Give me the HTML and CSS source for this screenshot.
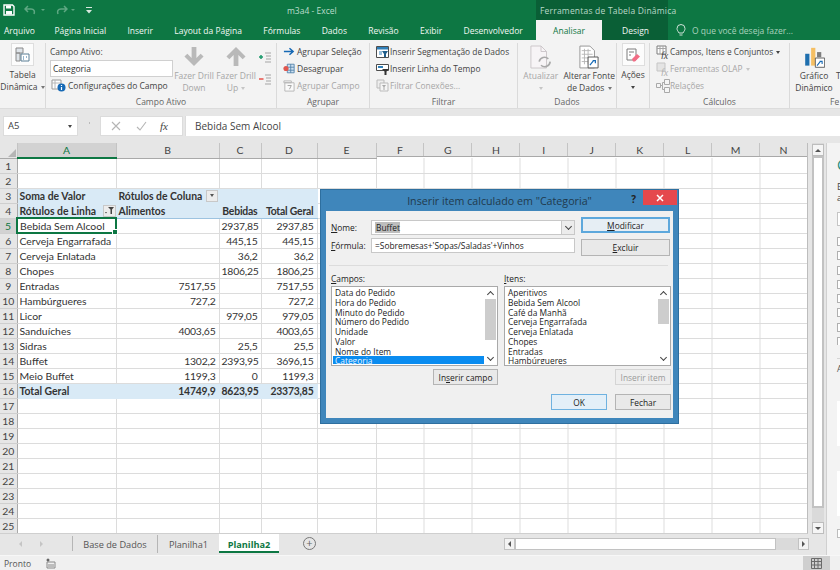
FILE: index.html
```html
<!DOCTYPE html>
<html lang="pt-BR">

<head>
    <meta charset="UTF-8">
    <title>m3a4 - Excel</title>
    <link rel="stylesheet" href="styles.css">
</head>

<body>

    <div class="chrome">
        <div class="title-row">
            <div class="qat">
                <svg width="12" height="12" viewBox="0 0 12 12"><path d="M1 1h8.500L11 2.500V11H1z" fill="none" stroke="#fff" stroke-width="1.400"/><path d="M3 1.500h5v3H3zM3 7h6v3.500H3z" fill="#fff"/></svg>
                <svg class="qat-faded" width="14" height="10" viewBox="0 0 14 10"><path d="M4 1L1 4l3 3M1 4h6c3 0 4 2 3 5" fill="none" stroke="#5fa883" stroke-width="1.500"/></svg>
                <span class="qat-caret"></span>
                <svg class="qat-faded" width="14" height="10" viewBox="0 0 14 10"><path d="M10 1l3 3-3 3M13 4H7C4 4 3 6 4 9" fill="none" stroke="#5fa883" stroke-width="1.500"/></svg>
                <span class="qat-caret"></span>
                <svg class="qat-more" width="6" height="7" viewBox="0 0 6 7"><path d="M0 0h6v1H0zM0 3h6L3 6.500z" fill="#d8e8df"/></svg>
            </div>
            <div class="doc-title">m3a4 - Excel</div>
            <div class="context-title">Ferramentas de Tabela Dinâmica</div>
        </div>
        <div class="tab-row">
            <div class="main-tabs">
                <div class="tab first">Arquivo</div>
                <div class="tab">Página Inicial</div>
                <div class="tab">Inserir</div>
                <div class="tab">Layout da Página</div>
                <div class="tab">Fórmulas</div>
                <div class="tab">Dados</div>
                <div class="tab">Revisão</div>
                <div class="tab">Exibir</div>
                <div class="tab">Desenvolvedor</div>
            </div>
            <div class="context-tabs">
                <div class="tab active">Analisar</div>
                <div class="tab design">Design</div>
            </div>
            <div class="tell-me">
                <svg width="10" height="13" viewBox="0 0 10 13"><path d="M3 9C2 7 1 6.500 1 4.500a4 4 0 0 1 8 0C9 6.500 8 7 7 9zM3.500 11h3" fill="none" stroke="#cfe3d8" stroke-width="1"/></svg>
                <span>O que você deseja fazer...</span>
            </div>
        </div>
    </div>

    <div class="ribbon">
        <div class="group g-pivot">
            <div class="big-btn boxed">
                <span class="icon-box">
                    <svg width="15" height="15" viewBox="0 0 15 15"><path d="M1 1h7v5H1zM1 6h4v8H1z" fill="#dfe5ea" stroke="#8a8a8a"/><path d="M6 7h8v7H6z" fill="#fff" stroke="#5b7f95"/><path d="M8 10h1M11 10h1M8 12h1" stroke="#2f6f9f"/></svg>
                </span>
                <span class="big-label">Tabela<br>Dinâmica <i class="caret"></i></span>
            </div>
        </div>

        <div class="group g-field">
            <div class="group-body">
                <div class="field-col">
                    <div class="small-line">Campo Ativo:</div>
                    <div class="field-input">Categoria</div>
                    <div class="small-line with-icon">
                        <svg width="15" height="13" viewBox="0 0 15 13"><path d="M1 1h9v9H1z" fill="#fff" stroke="#9a9a9a"/><path d="M1 4h9M4 1v9" stroke="#b8b8b8"/><circle cx="10.500" cy="8.500" r="4" fill="#1669b5"/><path d="M10.500 6v1M10.500 8v3" stroke="#fff" stroke-width="1.200"/></svg>
                        <span>Configurações do Campo</span>
                    </div>
                </div>
                <div class="drill">
                    <svg width="22" height="22" viewBox="0 0 22 22"><path d="M11 21L1 11l3-3 4.500 4.500V1h5v11.500L18 8l3 3z" fill="#b9b9b9"/></svg>
                    <span class="muted">Fazer Drill<br>Down</span>
                </div>
                <div class="drill">
                    <svg width="22" height="22" viewBox="0 0 22 22"><path d="M11 1L1 11l3 3 4.500-4.500V21h5V9.500L18 14l3-3z" fill="#b9b9b9"/></svg>
                    <span class="muted">Fazer Drill<br>Up <i class="caret faint"></i></span>
                </div>
                <div class="expand-col">
                    <svg width="12" height="12" viewBox="0 0 12 12"><path d="M0 5h4M2 3v4" stroke="#1d9a6c" stroke-width="1.500"/><path d="M6 1h6M7 4h5M7 7h5M6 10h6" stroke="#a5a5a5"/></svg>
                    <svg width="12" height="12" viewBox="0 0 12 12"><path d="M0 5h4.500" stroke="#e8504a" stroke-width="1.500"/><path d="M6 1h6M7 4h5M7 7h5M6 10h6" stroke="#a5a5a5"/></svg>
                </div>
            </div>
            <div class="group-label">Campo Ativo</div>
        </div>

        <div class="group g-group">
            <div class="group-body stack">
                <div class="small-line with-icon">
                    <svg width="12" height="9" viewBox="0 0 13 9"><path d="M1 4.500h9M7 1l4 3.500L7 8" fill="none" stroke="#1669b5" stroke-width="1.600"/></svg>
                    <span>Agrupar Seleção</span>
                </div>
                <div class="small-line with-icon">
                    <svg width="12" height="11" viewBox="0 0 14 12"><path d="M5 1h8v10H5z" fill="#cfe2f3" stroke="#4f81a8"/><path d="M5 4.500h8M5 8h8M9 1v10" stroke="#4f81a8"/><circle cx="3.500" cy="6" r="3" fill="#e0574f"/></svg>
                    <span>Desagrupar</span>
                </div>
                <div class="small-line with-icon muted">
                    <svg width="12" height="12" viewBox="0 0 13 13"><path d="M1 1h8v2H1zM2 3h10v9H2z" fill="#fafafa" stroke="#b5b5b5"/><path d="M5 6h4L7 10" fill="none" stroke="#a0a0a0"/></svg>
                    <span>Agrupar Campo</span>
                </div>
            </div>
            <div class="group-label">Agrupar</div>
        </div>

        <div class="group g-filter">
            <div class="group-body stack">
                <div class="small-line with-icon snug">
                    <svg width="13" height="12" viewBox="0 0 13 12"><path d="M.5.500h12v11H.500z" fill="#fff" stroke="#4d4d4d"/><path d="M1 1h11v2.500H1z" fill="#2f7fb8"/><path d="M3 6h3M3 8h3" stroke="#2f7fb8"/><path d="M6 5h6L10 8v3H8V8z" fill="#1f5d8a"/></svg>
                    <span>Inserir Segmentação de Dados</span>
                </div>
                <div class="small-line with-icon snug">
                    <svg width="13" height="12" viewBox="0 0 13 12"><path d="M.5 1.500h12v6H.500z" fill="#fff" stroke="#4d4d4d"/><path d="M2 4h5" stroke="#2f7fb8" stroke-width="2"/><path d="M6 6h7l-2.500 2.500V12H8.500V8.500z" fill="#333"/></svg>
                    <span>Inserir Linha do Tempo</span>
                </div>
                <div class="small-line with-icon snug muted">
                    <svg width="13" height="13" viewBox="0 0 13 13"><path d="M1 1h7v8H1z" fill="#eee" stroke="#bbb"/><path d="M4 4h8v8H4z" fill="#f5f5f5" stroke="#bbb"/><path d="M6 6h4L8.500 8v3H7.500V8z" fill="#aaa"/></svg>
                    <span>Filtrar Conexões...</span>
                </div>
            </div>
            <div class="group-label">Filtrar</div>
        </div>

        <div class="group g-data">
            <div class="group-body">
                <div class="big-btn refresh">
                    <svg width="22" height="24" viewBox="0 0 24 26"><path d="M1 1h11l6 6v18H1z" fill="#f7f4f6" stroke="#c9c4c7"/><path d="M12 1v6h6" fill="none" stroke="#c9c4c7"/><path d="M10 18a6 6 0 0 1 10-3M22 18a6 6 0 0 1-10 4" fill="none" stroke="#a9a9a9" stroke-width="1.800"/></svg>
                    <span class="big-label muted">Atualizar<br><i class="caret faint"></i></span>
                </div>
                <div class="big-btn source">
                    <svg width="20" height="24" viewBox="0 0 22 26"><path d="M1 1h11l5 5v19H1z" fill="#fff" stroke="#8f8f8f"/><path d="M3 6h10M3 10h12M3 14h12M3 18h12M6 4v17M10 4v17" stroke="#b5b5b5"/><path d="M10 13h11v12H10z" fill="#fff" stroke="#4d4d4d"/><path d="M12 22l4-5M15 17h3v3" fill="none" stroke="#1669b5" stroke-width="1.300"/></svg>
                    <span class="big-label">Alterar Fonte<br>de Dados <i class="caret"></i></span>
                </div>
            </div>
            <div class="group-label">Dados</div>
        </div>

        <div class="group g-actions">
            <div class="big-btn boxed">
                <span class="icon-box">
                    <svg width="15" height="14" viewBox="0 0 15 14"><path d="M1 1h9v11H1z" fill="#fff" stroke="#7d7d7d"/><path d="M3 4h5M3 7h2" stroke="#7d7d7d"/><path d="M6 11l5-5 3 2.500-5 5H7z" fill="#f26d85"/></svg>
                </span>
                <span class="big-label">Ações<br><i class="caret dark"></i></span>
            </div>
        </div>

        <div class="group g-calc">
            <div class="group-body stack">
                <div class="small-line with-icon flush">
                    <svg width="14" height="14" viewBox="0 0 14 14"><path d="M1 1h9v8H1z" fill="#fff" stroke="#7d7d7d"/><path d="M1 3.500h9M4 1v8M7 1v8" stroke="#a5a5a5"/><text x="5" y="14" class="fx-mark">fx</text></svg>
                    <span>Campos, Itens e Conjuntos <i class="caret dark"></i></span>
                </div>
                <div class="small-line with-icon flush muted">
                    <svg width="14" height="14" viewBox="0 0 14 14"><path d="M1 1h8v8H1z" fill="#e4e4e4" stroke="#c5c5c5"/><text x="5" y="14" class="fx-mark soft">fx</text></svg>
                    <span>Ferramentas OLAP <i class="caret faint"></i></span>
                </div>
                <div class="small-line with-icon flush muted">
                    <svg width="14" height="14" viewBox="0 0 14 14"><path d="M.5 4.500h4v4h-4zM8.500.500h5v5h-5zM8.500 8.500h5v5h-5z" fill="#f5f5f5" stroke="#a9a9a9"/><path d="M4.500 6.500h2v-3h2M6.500 6.500v4h2" fill="none" stroke="#a9a9a9"/></svg>
                    <span>Relações</span>
                </div>
            </div>
            <div class="group-label">Cálculos</div>
        </div>

        <div class="group g-tools">
            <div class="group-body">
                <div class="big-btn chart">
                    <svg width="21" height="22" viewBox="0 0 24 26"><path d="M1 8h5v14H1z" fill="#1f6fae"/><path d="M8 1h5v21H8z" fill="#f5bf63"/><path d="M15 6h5v6h-5z" fill="#7d7d7d"/><path d="M13 13h11v11H13z" fill="#fff" stroke="#4d4d4d"/><path d="M15 22l4-5M18 17h3v3" fill="none" stroke="#1669b5" stroke-width="1.300"/></svg>
                    <span class="big-label">Gráfico<br>Dinâmico</span>
                </div>
                <span class="cut-label">T</span>
            </div>
            <div class="group-label left">Fe</div>
        </div>
    </div>

    <div class="formula-bar">
        <div class="name-box">A5<i class="caret dark"></i></div>
        <div class="bar-dots"></div>
        <div class="fx-box">
            <svg width="10" height="10" viewBox="0 0 10 10"><path d="M1 1l8 8M9 1L1 9" stroke="#b5b5b5" stroke-width="1.100"/></svg>
            <svg width="11" height="10" viewBox="0 0 11 10"><path d="M1 6l3 3 6-8" fill="none" stroke="#b5b5b5" stroke-width="1.100"/></svg>
            <span class="fx-text">fx</span>
        </div>
        <div class="formula-input">Bebida Sem Alcool</div>
    </div>

    <div class="workspace">
        <div class="sheet-col">
            <div class="sheet-main">
                <div class="grid-wrap">
                    <table class="grid">
                        <colgroup>
                            <col class="c-row"><col class="c-a"><col class="c-b"><col class="c-c"><col class="c-d"><col class="c-e"><col class="c-rest">
                        </colgroup>
                        <thead>
                            <tr>
                                <th class="corner"><span class="corner-mark"></span></th>
                                <th class="col-active">A</th><th>B</th><th>C</th><th>D</th><th>E</th>
                                <th class="col-rest"><span>F</span><span>G</span><span>H</span><span>I</span><span>J</span><span>K</span><span>L</span><span>M</span><span>N</span></th>
                            </tr>
                        </thead>
                        <tbody>
                            <tr><th>1</th><td></td><td></td><td></td><td></td><td></td><td class="rest"></td></tr>
                            <tr><th>2</th><td></td><td></td><td></td><td></td><td></td><td class="rest"></td></tr>
                            <tr class="pivot-head"><th>3</th><td>Soma de Valor</td><td class="has-filter">Rótulos de Coluna<span class="filter-btn"><i class="caret"></i></span></td><td></td><td></td><td></td><td class="rest"></td></tr>
                            <tr class="pivot-head under"><th>4</th><td class="has-filter">Rótulos de Linha<span class="filter-btn on"><svg width="9" height="7" viewBox="0 0 9 7"><path d="M3 0h6L7 2.500V7H5.500V2.500zM0 5h2L1 6.500z" fill="#444"/></svg></span></td><td>Alimentos</td><td class="num">Bebidas</td><td class="num">Total Geral</td><td></td><td class="rest"></td></tr>
                            <tr><th class="row-active">5</th><td class="selected">Bebida Sem Alcool</td><td></td><td class="num">2937,85</td><td class="num">2937,85</td><td></td><td class="rest"></td></tr>
                            <tr><th>6</th><td>Cerveja Engarrafada</td><td></td><td class="num">445,15</td><td class="num">445,15</td><td></td><td class="rest"></td></tr>
                            <tr><th>7</th><td>Cerveja Enlatada</td><td></td><td class="num">36,2</td><td class="num">36,2</td><td></td><td class="rest"></td></tr>
                            <tr><th>8</th><td>Chopes</td><td></td><td class="num">1806,25</td><td class="num">1806,25</td><td></td><td class="rest"></td></tr>
                            <tr><th>9</th><td>Entradas</td><td class="num">7517,55</td><td></td><td class="num">7517,55</td><td></td><td class="rest"></td></tr>
                            <tr><th>10</th><td>Hambúrgueres</td><td class="num">727,2</td><td></td><td class="num">727,2</td><td></td><td class="rest"></td></tr>
                            <tr><th>11</th><td>Licor</td><td></td><td class="num">979,05</td><td class="num">979,05</td><td></td><td class="rest"></td></tr>
                            <tr><th>12</th><td>Sanduíches</td><td class="num">4003,65</td><td></td><td class="num">4003,65</td><td></td><td class="rest"></td></tr>
                            <tr><th>13</th><td>Sidras</td><td></td><td class="num">25,5</td><td class="num">25,5</td><td></td><td class="rest"></td></tr>
                            <tr><th>14</th><td>Buffet</td><td class="num">1302,2</td><td class="num">2393,95</td><td class="num">3696,15</td><td></td><td class="rest"></td></tr>
                            <tr><th>15</th><td>Meio Buffet</td><td class="num">1199,3</td><td class="num">0</td><td class="num">1199,3</td><td></td><td class="rest"></td></tr>
                            <tr class="pivot-total"><th>16</th><td>Total Geral</td><td class="num">14749,9</td><td class="num">8623,95</td><td class="num">23373,85</td><td></td><td class="rest"></td></tr>
                            <tr><th>17</th><td></td><td></td><td></td><td></td><td></td><td class="rest"></td></tr>
                            <tr><th>18</th><td></td><td></td><td></td><td></td><td></td><td class="rest"></td></tr>
                            <tr><th>19</th><td></td><td></td><td></td><td></td><td></td><td class="rest"></td></tr>
                            <tr><th>20</th><td></td><td></td><td></td><td></td><td></td><td class="rest"></td></tr>
                            <tr><th>21</th><td></td><td></td><td></td><td></td><td></td><td class="rest"></td></tr>
                            <tr><th>22</th><td></td><td></td><td></td><td></td><td></td><td class="rest"></td></tr>
                            <tr><th>23</th><td></td><td></td><td></td><td></td><td></td><td class="rest"></td></tr>
                            <tr><th>24</th><td></td><td></td><td></td><td></td><td></td><td class="rest"></td></tr>
                            <tr><th>25</th><td></td><td></td><td></td><td></td><td></td><td class="rest"></td></tr>
                        </tbody>
                    </table>
                </div>
                <div class="v-scroll">
                    <div class="sb-btn"><i class="arrow-up"></i></div>
                    <div class="sb-thumb"></div>
                    <div class="sb-track"></div>
                    <div class="sb-btn"><i class="arrow-down"></i></div>
                </div>
            </div>
            <div class="sheet-tabs">
                <div class="tab-nav"><i class="arrow-left"></i><i class="arrow-right"></i></div>
                <div class="sheet-tab base">Base de Dados</div>
                <div class="sheet-tab second">Planilha1</div>
                <div class="sheet-tab current">Planilha2</div>
                <div class="add-sheet">+</div>
                <div class="h-scroll">
                    <div class="hs-btn"><i class="arrow-left dark"></i></div>
                    <div class="hs-thumb"></div>
                    <div class="hs-track"></div>
                    <div class="hs-btn"><i class="arrow-right dark"></i></div>
                </div>
            </div>
        </div>
        <aside class="side-pane">
            <div class="pane-logo">C</div>
            <div class="pane-text">E<br>a</div>
            <div class="pane-search">P</div>
            <div class="pane-checks">
                <span></span><span></span><span></span><span></span><span></span><span class="on"></span><span></span><span class="on"></span>
            </div>
            <div class="pane-sep"></div>
            <div class="pane-a">A</div>
            <div class="pane-box"></div>
            <div class="pane-box second"></div>
            <div class="pane-foot"></div>
        </aside>
    </div>

    <div class="status-bar">
        <span>Pronto</span>
        <svg width="10" height="11" viewBox="0 0 10 11"><path d="M1 4h8v6H1z" fill="none" stroke="#8a8a8a"/><path d="M3 6v3M5 6v3M7 6v3" stroke="#8a8a8a"/><circle cx="2" cy="2" r="1.500" fill="#666"/></svg>
        <div class="view-btn">
            <svg width="11" height="11" viewBox="0 0 11 11"><path d="M.5.500h10v10H.500zM.5 3.500h10M.5 7h10M3.500.500v10M7 .500v10" fill="none" stroke="#6a6a6a"/></svg>
        </div>
    </div>

    <div class="dialog">
        <div class="dialog-title">
            <span class="dialog-name">Inserir item calculado em "Categoria"</span>
            <span class="dialog-help">?</span>
            <span class="dialog-close">
                <svg width="8" height="8" viewBox="0 0 8 8"><path d="M1 1l6 6M7 1L1 7" stroke="#fff" stroke-width="1.500"/></svg>
            </span>
        </div>
        <div class="dialog-body">
            <div class="top-area">
                <div class="field-grid">
                    <label><u>N</u>ome:</label>
                    <div class="text-box combo"><span><mark>Buffet</mark></span><b class="combo-btn"><i class="chevron"></i></b></div>
                    <label><u>F</u>órmula:</label>
                    <div class="text-box">=Sobremesas+'Sopas/Saladas'+Vinhos</div>
                </div>
                <div class="top-buttons">
                    <button class="default"><u>M</u>odificar</button>
                    <button><u>E</u>xcluir</button>
                </div>
            </div>
            <div class="dialog-sep"></div>
            <div class="lists">
                <div class="list-col">
                    <label><u>C</u>ampos:</label>
                    <div class="list-box">
                        <ul>
                            <li>Data do Pedido</li>
                            <li>Hora do Pedido</li>
                            <li>Minuto do Pedido</li>
                            <li>Número do Pedido</li>
                            <li>Unidade</li>
                            <li>Valor</li>
                            <li>Nome do Item</li>
                            <li class="picked">Categoria</li>
                        </ul>
                        <div class="list-scroll">
                            <i class="chevron up"></i>
                            <div class="list-thumb long"></div>
                            <i class="chevron"></i>
                        </div>
                    </div>
                    <button class="list-btn">In<u>s</u>erir campo</button>
                </div>
                <div class="list-col">
                    <label><u>I</u>tens:</label>
                    <div class="list-box">
                        <ul>
                            <li>Aperitivos</li>
                            <li>Bebida Sem Alcool</li>
                            <li>Café da Manhã</li>
                            <li>Cerveja Engarrafada</li>
                            <li>Cerveja Enlatada</li>
                            <li>Chopes</li>
                            <li>Entradas</li>
                            <li>Hambúrgueres</li>
                        </ul>
                        <div class="list-scroll">
                            <i class="chevron up"></i>
                            <div class="list-thumb"></div>
                            <i class="chevron"></i>
                        </div>
                    </div>
                    <button class="list-btn off">Inserir item</button>
                </div>
            </div>
            <div class="bottom-buttons">
                <button class="ok">OK</button>
                <button>Fechar</button>
            </div>
        </div>
    </div>

</body>

</html>
```

FILE: styles.css
```css
* {
    box-sizing: border-box;
}

body {
    margin: 0;
    width: 840px;
    height: 570px;
    overflow: hidden;
    background: #e6e6e6;
    font-family: "Open Sans", "Noto Sans", sans-serif;
    font-size: 8.5px;
    color: #444;
    display: flex;
    flex-direction: column;
}

/* green title area */

.chrome {
    height: 40px;
    background: #0d7743;
    color: #f2f7f4;
}

.title-row {
    height: 20px;
    display: flex;
    align-items: center;
}

.qat {
    width: 287px;
    padding-left: 3px;
    display: flex;
    align-items: center;
    gap: 3px;
}

.qat-faded {
    margin-left: 6px;
}

.qat-caret {
    width: 0;
    height: 0;
    border: 2px solid transparent;
    border-top-color: #5fa883;
    margin-top: 2px;
}

.qat-more {
    margin-left: 8px;
}

.doc-title {
    width: 249px;
    color: #bcdccb;
}

.context-title {
    width: 132px;
    height: 20px;
    line-height: 21px;
    padding-left: 4px;
    background: #0a5f36;
    color: #b9d8c8;
    letter-spacing: .2px;
    white-space: nowrap;
}

.tab-row {
    height: 20px;
    display: flex;
}

.main-tabs {
    width: 536px;
    flex: none;
    display: flex;
}

.tab {
    padding: 0 10.7px;
    line-height: 21px;
    white-space: nowrap;
}

.tab.first {
    padding-left: 4px;
    padding-right: 9px;
}

.context-tabs {
    width: 132px;
    flex: none;
    display: flex;
    background: #0a5f36;
}

.tab.active {
    width: 66px;
    padding: 0;
    text-align: center;
    background: #f3f3f3;
    color: #0d7743;
}

.tab.design {
    padding: 0 0 0 20px;
}

.tell-me {
    margin-left: 8px;
    display: flex;
    align-items: center;
    gap: 6px;
    color: #a9d2bd;
    white-space: nowrap;
}

/* ribbon */

.ribbon {
    height: 69px;
    flex: none;
    background: #f3f3f3;
    border-bottom: 1px solid #dcdcdc;
    display: flex;
    padding-top: 3px;
    overflow: hidden;
}

.group {
    height: 66px;
    border-right: 1px solid #dadada;
    display: flex;
    flex-direction: column;
    flex: none;
}

.group-body {
    height: 51px;
    flex: none;
    display: flex;
}

.group-body.stack {
    flex-direction: column;
    padding-left: 6px;
}

.group-label {
    height: 15px;
    line-height: 15px;
    text-align: center;
    color: #666;
}

.group-label.left {
    text-align: left;
    padding-left: 40px;
}

.g-pivot { width: 46px; }
.g-field { width: 231px; }
.g-group { width: 93px; }
.g-filter { width: 148px; }
.g-data { width: 99px; }
.g-actions { width: 33px; }
.g-calc { width: 140px; }
.g-tools { width: 50px; border-right: 0; }

.big-btn {
    display: flex;
    flex-direction: column;
    align-items: center;
}

.boxed .icon-box {
    width: 23px;
    height: 23px;
    background: #fcfcfc;
    border: 1px solid #dedede;
    display: flex;
    align-items: center;
    justify-content: center;
}

.big-label {
    line-height: 12px;
    text-align: center;
    white-space: nowrap;
    display: block;
    margin-top: 3px;
}

.g-pivot .big-btn {
    width: 45px;
}

.muted {
    color: #a6a6a6;
}

.caret {
    display: inline-block;
    width: 0;
    height: 0;
    border: 2px solid transparent;
    border-top: 3px solid #777;
    border-bottom: 0;
    vertical-align: middle;
    margin-left: 1px;
}

.caret.faint {
    border-top-color: #c5c5c5;
}

.caret.dark {
    border-top-color: #444;
}

.field-col {
    width: 123px;
    margin-left: 4px;
}

.small-line {
    height: 17px;
    line-height: 17px;
    white-space: nowrap;
}

.with-icon {
    display: flex;
    align-items: center;
    gap: 2px;
}

.with-icon.snug {
    gap: 1px;
    font-size: 8.4px;
}

.with-icon.flush {
    gap: 0;
    font-size: 8.3px;
}

.field-input {
    width: 123px;
    height: 17px;
    line-height: 15px;
    padding-left: 2px;
    background: #fff;
    border: 1px solid #d0d0d0;
    color: #333;
}

.field-col .field-input + .with-icon {
    margin-left: 1px;
}

.drill {
    width: 42px;
    display: flex;
    flex-direction: column;
    align-items: center;
    padding-top: 3px;
    line-height: 12px;
    text-align: center;
    white-space: nowrap;
}

.drill span {
    margin-top: 3px;
}

.expand-col {
    margin-left: 2px;
    padding-top: 9px;
    display: flex;
    flex-direction: column;
    gap: 10px;
}

.refresh {
    width: 44px;
    padding-top: 2px;
    margin-left: 1px;
}

.source {
    width: 54px;
    padding-top: 2px;
}

.refresh .big-label,
.source .big-label {
    margin-top: 1px;
}

.g-actions .big-btn {
    width: 32px;
}

.chart {
    width: 48px;
    flex: none;
    padding: 4px 0 0;
}

.chart .big-label {
    margin-top: 1px;
}

.cut-label {
    margin: 27px 0 0 -2px;
    line-height: 12px;
}

.fx-mark {
    font-family: "Liberation Serif", serif;
    font-style: italic;
    font-size: 10px;
    fill: #444;
}

.fx-mark.soft {
    fill: #b0b0b0;
}

/* formula bar */

.formula-bar {
    margin-top: 7px;
    height: 20px;
    display: flex;
    padding-left: 3px;
    flex: none;
}

.name-box {
    width: 75px;
    background: #fff;
    border: 1px solid #dcdcdc;
    padding: 0 5px 0 4px;
    line-height: 18px;
    font-size: 9.5px;
    display: flex;
    justify-content: space-between;
    align-items: center;
}

.name-box .caret {
    border-width: 3px 2.5px 0;
}

.bar-dots {
    width: 22px;
    background: radial-gradient(circle, #bbb 1px, transparent 1px) center 5px / 3px 4px no-repeat;
}

.fx-box {
    width: 83px;
    background: #fff;
    border: 1px solid #dcdcdc;
    display: flex;
    align-items: center;
    padding-left: 10px;
    gap: 15px;
}

.fx-text {
    font-family: "Liberation Serif", serif;
    font-style: italic;
    font-size: 11px;
    color: #444;
    margin-left: -2px;
}

.formula-input {
    flex: 1;
    margin-left: 2px;
    background: #fff;
    border-left: 1px solid #dcdcdc;
    padding-left: 9px;
    line-height: 21px;
    font-size: 10px;
    color: #444;
}

/* sheet */

.workspace {
    margin-top: 7px;
    flex: 1;
    display: flex;
    min-height: 0;
}

.sheet-col {
    width: 826px;
    flex: none;
    display: flex;
    flex-direction: column;
}

.sheet-main {
    height: 391px;
    flex: none;
    display: flex;
}

.grid-wrap {
    width: 808px;
    height: 391px;
    flex: none;
    background: #fff;
    overflow: hidden;
    border-bottom: 1px solid #cfcfcf;
    border-right: 1px solid #bdbdbd;
}

.grid {
    border-collapse: collapse;
    table-layout: fixed;
    width: 808px;
    font-family: Lato, "Open Sans", sans-serif;
    font-size: 10.4px;
    color: #333;
}

.c-row { width: 17px; }
.c-a { width: 99px; }
.c-b { width: 103px; }
.c-c { width: 42px; }
.c-d { width: 56px; }
.c-e { width: 59px; }
.c-rest { width: 432px; }

.grid th,
.grid td {
    height: 15px;
    padding: 0;
    line-height: 14px;
    white-space: nowrap;
}

.grid thead th {
    height: 14px;
    background: #e6e6e6;
    border-right: 1px solid #c4c4c4;
    border-bottom: 1px solid #a9a9a9;
    font-weight: 400;
    color: #444;
}

.grid .corner {
    position: relative;
}

.corner-mark {
    position: absolute;
    right: 1px;
    bottom: 1px;
    border: 4px solid #b5b5b5;
    border-top-color: transparent;
    border-left-color: transparent;
}

.grid thead .col-active {
    background: #d2d2d2;
    color: #0d7743;
    border-bottom: 2px solid #0d7743;
}

.grid thead .col-rest {
    display: flex;
    border-right: 0;
}

.col-rest span {
    width: 48px;
    text-align: center;
    border-right: 1px solid #c4c4c4;
}

.grid tbody th {
    background: #e6e6e6;
    border-right: 1px solid #a9a9a9;
    border-bottom: 1px solid #cfcfcf;
    font-weight: 400;
    color: #444;
}

.grid tbody .row-active {
    background: #d2d2d2;
    color: #0d7743;
    border-right: 2px solid #0d7743;
}

.grid td {
    border-right: 1px solid #dcdcdc;
    border-bottom: 1px solid #dcdcdc;
    padding: 0 2px;
}

.grid td.num {
    text-align: right;
    padding-right: 3px;
    letter-spacing: -.2px;
}

.grid td.rest {
    padding: 0;
    border-right: 0;
    background: repeating-linear-gradient(to right, transparent 0 47px, #dcdcdc 47px 48px);
}

.pivot-head td:nth-of-type(-n+4),
.pivot-total td:nth-of-type(-n+4) {
    background: #d9eaf6;
    border-right-color: #d9eaf6;
    border-bottom-color: #d9eaf6;
    font-weight: 700;
}

.pivot-head.under td:nth-of-type(-n+4) {
    border-bottom-color: #9dc3e0;
}

.pivot-total td:nth-of-type(-n+4) {
    border-top: 1px solid #9dc3e0;
}

.has-filter {
    position: relative;
}

.filter-btn {
    position: absolute;
    right: 1px;
    top: 1px;
    width: 12px;
    height: 12px;
    background: #ececec;
    border: 1px solid #c8c8c8;
    display: flex;
    align-items: center;
    justify-content: center;
}

.filter-btn .caret {
    margin: 0;
    border-top-color: #555;
}

.filter-btn.on {
    width: 13px;
    right: 0;
}

.grid td.selected {
    position: relative;
    outline: 2px solid #0d7743;
    outline-offset: -1px;
}

.grid td.selected::after {
    content: "";
    position: absolute;
    right: -2px;
    bottom: -2px;
    width: 4px;
    height: 4px;
    background: #0d7743;
    border: 1px solid #fff;
}

.v-scroll {
    width: 12px;
    margin-left: 4px;
    padding-top: 1px;
    display: flex;
    flex-direction: column;
    background: #dadada;
}

.sb-btn {
    height: 12px;
    background: #f5f5f5;
    border: 1px solid #bdbdbd;
    display: flex;
    align-items: center;
    justify-content: center;
    flex: none;
}

.sb-thumb {
    height: 352px;
    background: #fff;
    border: 2px solid #c2c2c2;
    flex: none;
}

.sb-track {
    flex: 1;
}

.arrow-up,
.arrow-down {
    width: 0;
    height: 0;
    border: 3px solid transparent;
}

.arrow-up {
    border-top: 0;
    border-bottom-color: #555;
}

.arrow-down {
    border-bottom: 0;
    border-top-color: #555;
}

.arrow-left,
.arrow-right {
    display: block;
    width: 0;
    height: 0;
    border: 3px solid transparent;
}

.arrow-left {
    border-left: 0;
    border-right-color: #c5c5c5;
}

.arrow-right {
    border-right: 0;
    border-left-color: #c5c5c5;
}

.arrow-left.dark {
    border-right-color: #555;
}

.arrow-right.dark {
    border-left-color: #555;
}

.sheet-tabs {
    height: 20px;
    flex: none;
    display: flex;
    align-items: stretch;
}

.tab-nav {
    width: 73px;
    padding-left: 19px;
    display: flex;
    align-items: center;
    gap: 18px;
    border-right: 1px solid #b5b5b5;
    margin: 2px 0 3px;
}

.sheet-tab {
    line-height: 19px;
    height: 18px;
    margin-top: 1px;
    text-align: center;
    font-size: 9.2px;
    color: #555;
}

.sheet-tab.base {
    width: 85px;
    border-right: 1px solid #b5b5b5;
}

.sheet-tab.second {
    width: 61px;
}

.sheet-tab.current {
    margin-top: 0;
    width: 60px;
    padding-top: 1px;
    background: #fff;
    color: #0d7743;
    font-weight: 700;
    border-bottom: 2px solid #0d7743;
    height: 19px;
}

.add-sheet {
    width: 13px;
    height: 13px;
    margin: 3px 0 0 24px;
    border: 1px solid #777;
    border-radius: 50%;
    text-align: center;
    line-height: 10px;
    font-size: 11px;
    color: #666;
}

.h-scroll {
    margin: 4px 0 0 188px;
    width: 305px;
    height: 12px;
    flex: none;
    display: flex;
    background: #dadada;
}

.hs-btn {
    width: 11px;
    background: #f3f3f3;
    border: 1px solid #c2c2c2;
    display: flex;
    align-items: center;
    justify-content: center;
    flex: none;
}

.hs-thumb {
    width: 261px;
    background: #fff;
    border: 1px solid #c2c2c2;
    flex: none;
}

.hs-track {
    flex: 1;
}

.side-pane {
    flex: 1;
    border-left: 1px solid #d0d0d0;
    background: #f3f3f3;
    padding: 14px 0 0 10px;
    overflow: hidden;
    white-space: nowrap;
}

.pane-logo {
    height: 16px;
    font-size: 14px;
    line-height: 16px;
    color: #1d8a78;
}

.pane-text {
    margin-top: 8px;
    line-height: 11px;
    height: 24px;
    font-size: 9px;
    color: #444;
}

.pane-search {
    margin-top: 7px;
    height: 14px;
    width: 14px;
    border: 1px solid #c5c5c5;
    background: #fff;
    line-height: 12px;
    padding-left: 2px;
}

.pane-checks {
    margin-top: 11px;
    height: 108px;
    overflow: hidden;
    display: flex;
    flex-direction: column;
    gap: 5.3px;
}

.pane-checks span {
    flex: none;
    width: 9px;
    height: 9px;
    border: 1px solid #b0b0b0;
    background: #fff;
}

.pane-checks span.on {
    background: linear-gradient(#777, #777) center / 3px 3px no-repeat #fff;
}

.pane-sep {
    height: 1px;
    margin-top: 13px;
    background: #d5d5d5;
}

.pane-a {
    margin-top: 4px;
    height: 24px;
    color: #555;
}

.pane-box {
    height: 45px;
    margin-top: 14px;
    background: #fff;
}

.pane-box.second {
    margin-top: 25px;
}

.pane-foot {
    margin-top: 13px;
    height: 9px;
    width: 9px;
    background: #fff;
    border: 1px solid #bdbdbd;
}

/* status bar */

.status-bar {
    height: 15px;
    flex: none;
    background: #f0f0f0;
    border-top: 1px solid #f7f7f7;
    display: flex;
    align-items: center;
    padding-left: 4px;
    gap: 15px;
    color: #555;
}

.view-btn {
    margin-left: auto;
    margin-right: 10px;
    width: 27px;
    height: 14px;
    background: #cfcfcf;
    display: flex;
    align-items: center;
    justify-content: center;
}

/* dialog */

.dialog {
    position: absolute;
    left: 320px;
    top: 189px;
    width: 359px;
    height: 235px;
    background: #3f86bb;
    border: 1px solid #2e6f9f;
    padding: 0 5px 5px;
    display: flex;
    flex-direction: column;
    font-size: 8.4px;
    color: #222;
}

.dialog-title {
    height: 21px;
    flex: none;
    position: relative;
    text-align: center;
    padding-top: 1px;
    font-size: 10.7px;
    line-height: 20px;
    color: #1f3a4d;
}

.dialog-help {
    position: absolute;
    right: 37px;
    top: -1px;
    font-size: 10px;
    font-weight: 700;
    color: #222;
}

.dialog-close {
    position: absolute;
    right: -4px;
    top: 0;
    width: 34px;
    height: 15px;
    background: #e5484d;
    display: flex;
    align-items: center;
    justify-content: center;
}

.dialog-body {
    flex: 1;
    background: #f0f0f0;
    padding: 6px 3px 0 5px;
}

.top-area {
    display: flex;
    gap: 6px;
}

.field-grid {
    display: grid;
    grid-template-columns: 40px 204px;
    grid-auto-rows: 15px;
    row-gap: 3px;
    margin-top: 3px;
    align-items: center;
}

.text-box {
    height: 15px;
    line-height: 13px;
    background: #fff;
    border: 1px solid #c8c8c8;
    padding-left: 3px;
    white-space: nowrap;
}

.combo {
    display: flex;
    justify-content: space-between;
}

mark {
    background: #bdbdbd;
    color: #222;
    padding: 0 0 0 1px;
}

.combo-btn {
    width: 13px;
    background: #ececec;
    border-left: 1px solid #c8c8c8;
    display: flex;
    align-items: center;
    justify-content: center;
}

.chevron {
    display: block;
    width: 5px;
    height: 5px;
    border: solid #444;
    border-width: 0 1.5px 1.5px 0;
    transform: translateY(-1px) rotate(45deg);
}

.chevron.up {
    transform: translateY(1px) rotate(225deg);
}

.top-buttons {
    width: 89px;
    display: flex;
    flex-direction: column;
    gap: 6px;
}

button {
    font-family: inherit;
    font-size: 8.4px;
    color: #222;
    height: 16px;
    padding: 0;
    background: #e9e9e9;
    border: 1px solid #b4b4b4;
}

.top-buttons button {
    height: 17px;
}

.top-buttons button.default {
    height: 16px;
    border: 2px solid #5da8dc;
    background: #e6eef4;
}

.dialog-sep {
    height: 1px;
    background: #dcdcdc;
    margin: 9px 2px 7px -2px;
}

.lists {
    display: grid;
    grid-template-columns: 167px 167px;
    gap: 6px;
}

.list-col {
    display: flex;
    flex-direction: column;
    align-items: flex-end;
}

.list-col label {
    align-self: flex-start;
    line-height: 11px;
    height: 13px;
}

.list-box {
    width: 100%;
    height: 80px;
    background: #fff;
    border: 1px solid #a9a9a9;
    display: flex;
    justify-content: space-between;
    padding: 1px;
}

.list-box ul {
    list-style: none;
    margin: 0;
    padding: 0;
    flex: 1;
    overflow: hidden;
}

.list-box li {
    height: 9.75px;
    line-height: 10px;
    padding-left: 2px;
    white-space: nowrap;
}

.list-box li.picked {
    background: #0a8cf0;
    color: #e8f4ff;
}

.list-scroll {
    width: 11px;
    display: flex;
    flex-direction: column;
    align-items: center;
    margin-left: 1px;
}

.list-scroll .chevron {
    height: 5px;
    width: 5px;
    margin: 3px 0;
    flex: none;
}

.list-thumb {
    width: 11px;
    height: 25px;
    background: #cdcdcd;
    margin-bottom: auto;
}

.list-thumb.long {
    height: 41px;
}

.list-btn {
    margin-top: 3px;
    width: 65px;
    height: 16px;
}

.list-btn.off {
    width: 56px;
    color: #9a9a9a;
    background: #eeeeee;
    border-color: #d5d5d5;
}

.bottom-buttons {
    display: flex;
    justify-content: flex-end;
    gap: 8px;
    margin: 9px -1px 0 0;
}

.bottom-buttons button {
    width: 56px;
    height: 16px;
}

button.ok {
    background: #e3eff8;
    border-color: #6fb2e0;
}
```
